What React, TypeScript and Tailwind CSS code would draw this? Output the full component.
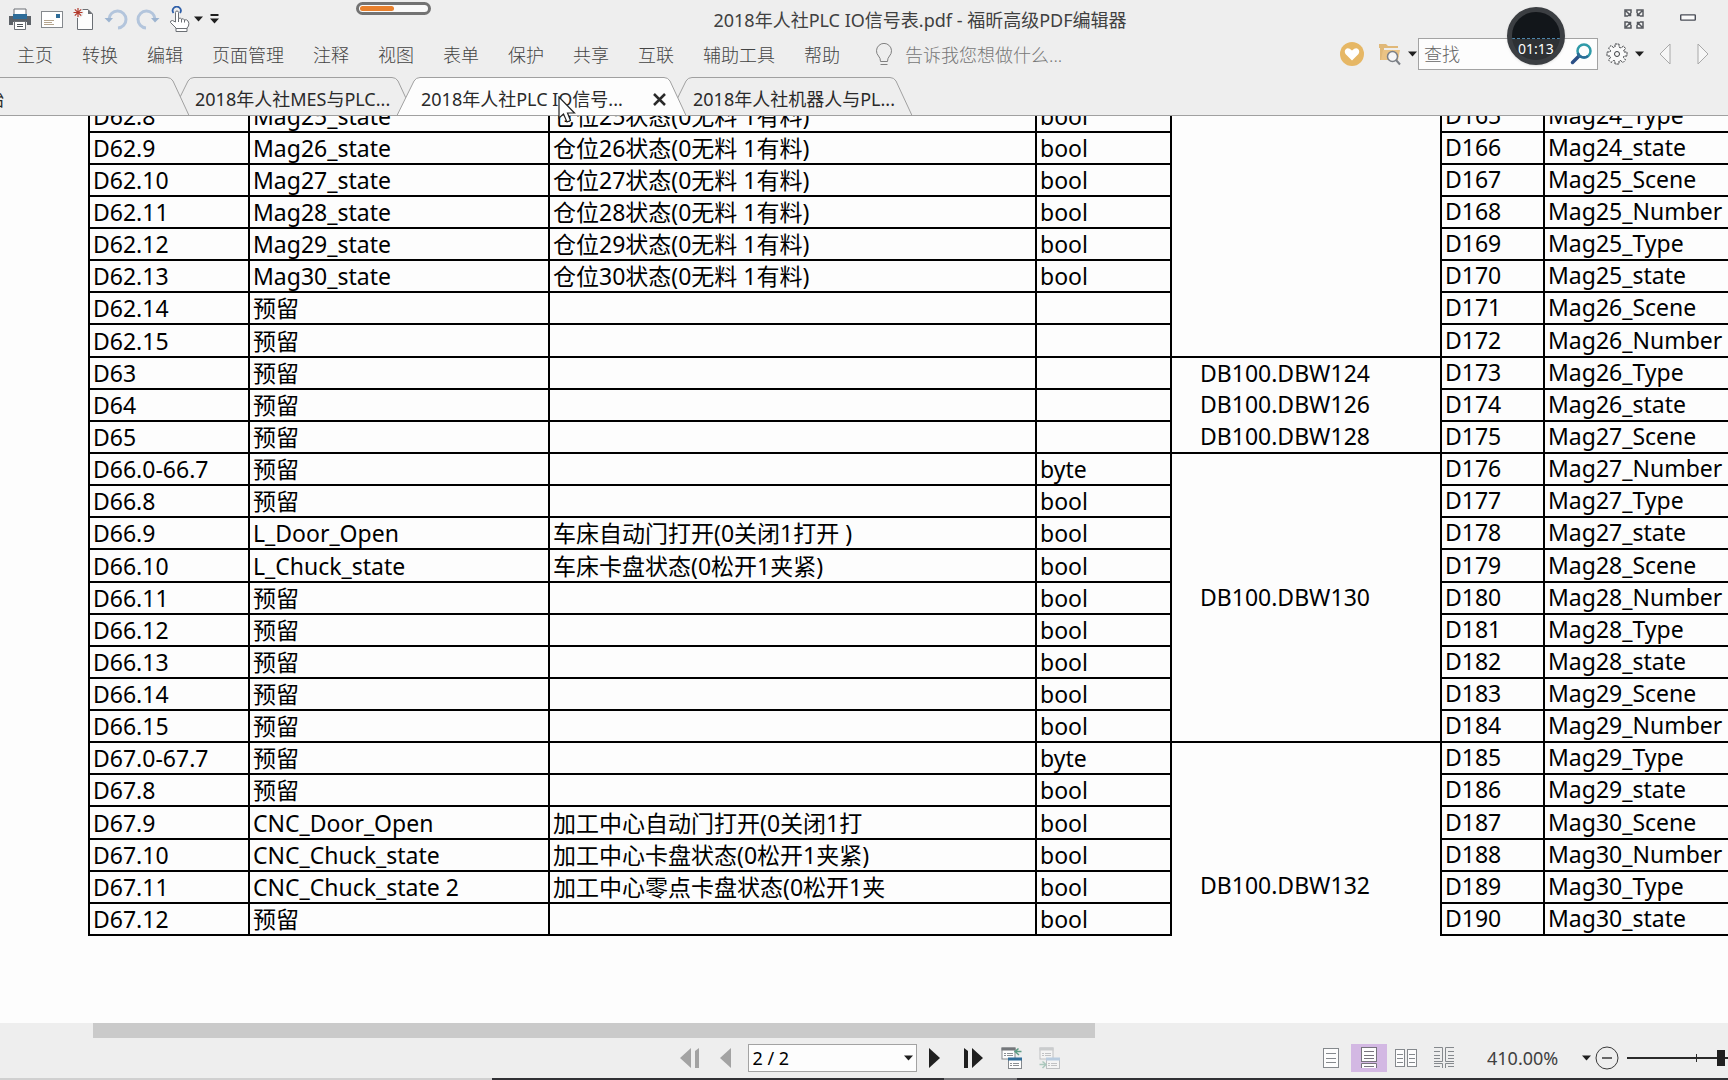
import type { ReactNode } from "react";

interface Tab {
  title: string;
  width: number;
  className: string;
  active?: boolean;
}

interface Row {
  addr: string;
  name: string;
  desc?: string;
  type?: string;
  tall?: boolean;
  rightAddr: string;
  rightName: string;
}

interface Group {
  span: number;
  label: string;
  className: string;
}

const MENUS = [
  "主页",
  "转换",
  "编辑",
  "页面管理",
  "注释",
  "视图",
  "表单",
  "保护",
  "共享",
  "互联",
  "辅助工具",
  "帮助",
];

const TABS: Tab[] = [
  { title: "开始", width: 249, className: "z-20 w-[249px] -ml-[60px] pl-7" },
  { title: "2018年人社MES与PLC...", width: 243, className: "z-10 w-[243px] -ml-[18px] pl-6" },
  {
    title: "2018年人社PLC IO信号...",
    width: 289,
    className: "z-30 w-[289px] -ml-[17px] pl-6",
    active: true,
  },
  { title: "2018年人社机器人与PL...", width: 243, className: "z-10 w-[243px] -ml-[17px] pl-6" },
];

const ROWS: Row[] = [
  { addr: "D62.8", name: "Mag25_state", desc: "仓位25状态(0无料 1有料)", type: "bool", rightAddr: "D165", rightName: "Mag24_Type" },
  { addr: "D62.9", name: "Mag26_state", desc: "仓位26状态(0无料 1有料)", type: "bool", rightAddr: "D166", rightName: "Mag24_state" },
  { addr: "D62.10", name: "Mag27_state", desc: "仓位27状态(0无料 1有料)", type: "bool", rightAddr: "D167", rightName: "Mag25_Scene" },
  { addr: "D62.11", name: "Mag28_state", desc: "仓位28状态(0无料 1有料)", type: "bool", rightAddr: "D168", rightName: "Mag25_Number" },
  { addr: "D62.12", name: "Mag29_state", desc: "仓位29状态(0无料 1有料)", type: "bool", rightAddr: "D169", rightName: "Mag25_Type" },
  { addr: "D62.13", name: "Mag30_state", desc: "仓位30状态(0无料 1有料)", type: "bool", rightAddr: "D170", rightName: "Mag25_state" },
  { addr: "D62.14", name: "预留", rightAddr: "D171", rightName: "Mag26_Scene" },
  { addr: "D62.15", name: "预留", tall: true, rightAddr: "D172", rightName: "Mag26_Number" },
  { addr: "D63", name: "预留", rightAddr: "D173", rightName: "Mag26_Type" },
  { addr: "D64", name: "预留", rightAddr: "D174", rightName: "Mag26_state" },
  { addr: "D65", name: "预留", rightAddr: "D175", rightName: "Mag27_Scene" },
  { addr: "D66.0-66.7", name: "预留", type: "byte", rightAddr: "D176", rightName: "Mag27_Number" },
  { addr: "D66.8", name: "预留", type: "bool", rightAddr: "D177", rightName: "Mag27_Type" },
  { addr: "D66.9", name: "L_Door_Open", desc: "车床自动门打开(0关闭1打开 )", type: "bool", rightAddr: "D178", rightName: "Mag27_state" },
  { addr: "D66.10", name: "L_Chuck_state", desc: "车床卡盘状态(0松开1夹紧)", type: "bool", tall: true, rightAddr: "D179", rightName: "Mag28_Scene" },
  { addr: "D66.11", name: "预留", type: "bool", rightAddr: "D180", rightName: "Mag28_Number" },
  { addr: "D66.12", name: "预留", type: "bool", rightAddr: "D181", rightName: "Mag28_Type" },
  { addr: "D66.13", name: "预留", type: "bool", rightAddr: "D182", rightName: "Mag28_state" },
  { addr: "D66.14", name: "预留", type: "bool", rightAddr: "D183", rightName: "Mag29_Scene" },
  { addr: "D66.15", name: "预留", type: "bool", rightAddr: "D184", rightName: "Mag29_Number" },
  { addr: "D67.0-67.7", name: "预留", type: "byte", rightAddr: "D185", rightName: "Mag29_Type" },
  { addr: "D67.8", name: "预留", type: "bool", rightAddr: "D186", rightName: "Mag29_state" },
  { addr: "D67.9", name: "CNC_Door_Open", desc: "加工中心自动门打开(0关闭1打", type: "bool", tall: true, rightAddr: "D187", rightName: "Mag30_Scene" },
  { addr: "D67.10", name: "CNC_Chuck_state", desc: "加工中心卡盘状态(0松开1夹紧)", type: "bool", rightAddr: "D188", rightName: "Mag30_Number" },
  { addr: "D67.11", name: "CNC_Chuck_state 2", desc: "加工中心零点卡盘状态(0松开1夹", type: "bool", rightAddr: "D189", rightName: "Mag30_Type" },
  { addr: "D67.12", name: "预留", type: "bool", rightAddr: "D190", rightName: "Mag30_state" },
];

// Merged cells of the middle column, keyed by the row they start on
const GROUPS: Record<number, Group> = {
  0: { span: 8, label: "", className: "border-b-2" },
  8: { span: 1, label: "DB100.DBW124", className: "pb-0.5" },
  9: { span: 1, label: "DB100.DBW126", className: "pb-0.5" },
  10: { span: 1, label: "DB100.DBW128", className: "border-b-2 pb-0.5" },
  11: { span: 9, label: "DB100.DBW130", className: "border-b-2 pb-0.5" },
  20: { span: 6, label: "DB100.DBW132", className: "align-bottom pb-9" },
};

const Caret = () => (
  <svg width="9" height="6" viewBox="0 0 9 6" className="shrink-0" aria-hidden="true">
    <path d="M0 0.5H9L4.5 5.5Z" fill="#1f1f1f" />
  </svg>
);

interface IconButtonProps {
  label: string;
  className?: string;
  children: ReactNode;
}

const IconButton = ({ label, className = "", children }: IconButtonProps) => (
  <button type="button" aria-label={label} className={`flex shrink-0 items-center justify-center ${className}`}>
    {children}
  </button>
);

const QuickAccess = () => (
  <div className="flex h-full shrink-0 items-center pl-2">
    <IconButton label="打印" className="w-6">
      <svg width="24" height="24" viewBox="0 0 24 24">
        <path d="M6 2H18V8H6Z" fill="#fff" stroke="#6b6f74" />
        <path d="M1 9H5V12H19V9H23V18H19V15H5V18H1Z" fill="#5d6268" />
        <rect x="5" y="7" width="14" height="5" fill="#2f6d99" />
        <path d="M6.5 14.5H17.5V22.5H6.5Z" fill="#fff" stroke="#6b6f74" />
        <path d="M9 17.5H15M9 19.5H15" stroke="#4d5257" />
      </svg>
    </IconButton>
    <IconButton label="电子邮件" className="ml-2 w-6">
      <svg width="24" height="24" viewBox="0 0 24 24">
        <rect x="1.5" y="4.5" width="21" height="16" fill="#fff" stroke="#85898d" />
        <rect x="16" y="7" width="4" height="4" fill="#2f6d99" />
        <path d="M4 13.5H14M4 15.5H12M4 17.5H14" stroke="#b5a58e" />
      </svg>
    </IconButton>
    <IconButton label="新建" className="ml-2 w-6">
      <svg width="24" height="24" viewBox="0 0 24 24">
        <path d="M5.5 2.5H16L20.5 7V22.5H5.5Z" fill="#fdfdfd" stroke="#6b6f74" />
        <path d="M16 2.5V7H20.5Z" fill="#6b6f74" />
        <circle cx="6" cy="5.5" r="5.5" fill="#eee" />
        <path d="M6 1V10M1.5 5.5H10.5M2.8 2.3L9.2 8.7M9.2 2.3L2.8 8.7" stroke="#b33a2c" strokeWidth="1.2" />
      </svg>
    </IconButton>
    <IconButton label="撤销" className="ml-2 w-6">
      <svg width="24" height="24" viewBox="0 0 24 24">
        <path d="M5 12A8.5 8.5 0 1 1 14 21" fill="none" stroke="#b3c5dc" strokeWidth="3" />
        <path d="M0.5 11H9L5 15.5Z" fill="#9db4d0" />
      </svg>
    </IconButton>
    <IconButton label="重做" className="ml-2 w-6">
      <svg width="24" height="24" viewBox="0 0 24 24">
        <path d="M19 12A8.5 8.5 0 1 0 10 21" fill="none" stroke="#b3c5dc" strokeWidth="3" />
        <path d="M23.5 11H15L19 15.5Z" fill="#9db4d0" />
      </svg>
    </IconButton>
    <IconButton label="手型工具" className="ml-2 w-6">
      <svg width="24" height="26" viewBox="0 0 24 26">
        <path d="M5.5 7A4 4 0 1 1 12 7" fill="none" stroke="#2f5fa8" strokeWidth="1.8" />
        <path
          d="M7.5 16V6.5Q7.5 5 9 5T10.5 6.5V12.5Q12.5 11.5 13.5 13Q15.5 12 16.5 14Q18.5 13 20 15Q21.5 17 20.5 20L19 22V25.5H8V22L2.5 16.5Q2 14.5 4.5 14.5Z"
          fill="#fff"
          stroke="#6b6f74"
        />
        <path d="M10.5 12.5V16M13.5 13V16.5M16.5 14V16.5M8 22.5H19" stroke="#6b6f74" />
      </svg>
    </IconButton>
    <IconButton label="更多工具" className="w-3">
      <Caret />
    </IconButton>
    <IconButton label="自定义快速访问工具栏" className="ml-1 w-3">
      <svg width="9" height="10" viewBox="0 0 9 10">
        <path d="M0.5 0H8.5V2H0.5ZM0 4.5H9L4.5 9.5Z" fill="#1f1f1f" />
      </svg>
    </IconButton>
  </div>
);

const SearchTools = () => (
  <div className="flex h-8 shrink-0 items-center pr-4">
    <IconButton label="收藏" className="w-6">
      <svg width="24" height="24" viewBox="0 0 24 24">
        <circle cx="12" cy="12" r="12" fill="#e6b765" />
        <path d="M12 18.5L5.5 12Q3.8 9 6 7T12 8.5Q15.8 5 18 7T18.5 12Z" fill="#fff" />
      </svg>
    </IconButton>
    <IconButton label="搜索文件夹" className="ml-[14px] w-6">
      <svg width="24" height="24" viewBox="0 0 24 24">
        <path d="M1 2H8L10 4H20V6H6V18H2V6H1Z" fill="#e0b878" />
        <path d="M5 8H22L20 18H3Z" fill="#eac384" />
        <circle cx="14.5" cy="14.5" r="5" fill="#f6f6f6" stroke="#7b7f86" strokeWidth="1.5" />
        <path d="M18 18L22 22.5" stroke="#7b7f86" strokeWidth="2" />
      </svg>
    </IconButton>
    <IconButton label="搜索选项" className="ml-1 w-3">
      <Caret />
    </IconButton>
    <div className="flex h-8 w-[180px] items-center border border-[#a3a3a3] bg-[#fdfdfd] pr-1">
      <input
        type="text"
        aria-label="查找"
        placeholder="查找"
        className="min-w-0 flex-1 bg-transparent pl-[5px] text-lg leading-6 font-light outline-none placeholder:text-[#666]"
      />
      <IconButton label="开始查找" className="w-6">
        <svg width="22" height="22" viewBox="0 0 22 22">
          <path d="M2.5 19.5L10 12" stroke="#2b4f86" strokeWidth="3.5" strokeLinecap="round" />
          <circle cx="14" cy="8" r="6.5" fill="#fdfdfd" stroke="#2f9aa8" strokeWidth="2.5" />
          <path d="M7.8 10A6.5 6.5 0 0 0 18 13" fill="none" stroke="#2a6c97" strokeWidth="2.5" />
        </svg>
      </IconButton>
    </div>
    <IconButton label="设置" className="ml-2 w-[22px]">
      <svg width="22" height="22" viewBox="0 0 22 22" fill="#fafafa" stroke="#3d3f42">
        <path
          d="M9 1H13V4L15 5L17.5 3L19.5 5.5L17.5 8L18 9H21V13H18L17.5 14.5L19.5 17L17 19.5L14.5 17.5L13 18V21H9V18L7.5 17.5L5 19.5L2.5 17L4.5 14.5L4 13H1V9H4L4.5 7.5L2.5 5L5 2.5L7.5 4.5L9 4Z"
          strokeDasharray="2.5 0.8"
        />
        <circle cx="11" cy="11" r="2.5" />
      </svg>
    </IconButton>
    <IconButton label="设置选项" className="ml-[2px] w-[18px]">
      <Caret />
    </IconButton>
    <IconButton label="上一个" className="ml-2 w-[18px]">
      <svg width="12" height="22" viewBox="0 0 12 22">
        <path d="M11 1V21L1 11Z" fill="#f6f6f6" stroke="#a8a8a8" />
      </svg>
    </IconButton>
    <IconButton label="下一个" className="ml-5 w-[18px]">
      <svg width="12" height="22" viewBox="0 0 12 22">
        <path d="M1 1V21L11 11Z" fill="#f6f6f6" stroke="#a8a8a8" />
      </svg>
    </IconButton>
  </div>
);

const TitleBar = () => (
  <div className="flex h-[38px] items-center">
    <QuickAccess />
    <h1 className="min-w-0 flex-1 truncate pt-0.5 pr-1 text-center text-lg leading-6 text-[#404040]">
      2018年人社PLC IO信号表.pdf - 福昕高级PDF编辑器
    </h1>
    <div className="flex h-8 shrink-0 items-center gap-9 pr-8">
      <IconButton label="全屏" className="w-5">
        <svg width="20" height="20" viewBox="0 0 20 20" fill="none" stroke="#55585e" strokeWidth="1.5">
          <path d="M4 7H1V1H7V4M16 7H19V1H13V4M4 13H1V19H7V16M16 13H19V19H13V16M2 2L6.5 6.5M6.5 4V6.5H4M18 2L13.5 6.5M13.5 4V6.5H16M2 18L6.5 13.5M4 13.5H6.5V16M18 18L13.5 13.5M16 13.5H13.5V16" />
        </svg>
      </IconButton>
      <IconButton label="最小化" className="w-4 pb-1">
        <svg width="17" height="7" viewBox="0 0 17 7">
          <rect x="0.75" y="0.75" width="15.5" height="5.5" rx="0.5" fill="#fafafa" stroke="#4a4d57" strokeWidth="1.5" />
        </svg>
      </IconButton>
    </div>
  </div>
);

const MenuBar = () => (
  <div className="flex h-8 items-center">
    <nav className="flex shrink-0 gap-[29px] pt-0.5 pl-[17px]">
      {MENUS.map((menu) => (
        <button key={menu} type="button" className="text-lg leading-6 font-light text-[#444]">
          {menu}
        </button>
      ))}
    </nav>
    <label className="ml-[35px] flex min-w-0 flex-1 items-center gap-3 pt-0.5">
      <svg width="18" height="24" viewBox="0 0 18 24" fill="none" stroke="#808080" className="shrink-0" aria-hidden="true">
        <path d="M5.5 18.5Q5.5 15 3.5 13A7.5 7.5 0 1 1 14.5 13Q12.5 15 12.5 18.5ZM5.5 21.5H12.5" />
      </svg>
      <input
        type="text"
        aria-label="告诉我您想做什么"
        placeholder="告诉我您想做什么..."
        className="w-60 bg-transparent text-lg leading-6 font-light outline-none placeholder:text-[#777]"
      />
    </label>
    <SearchTools />
  </div>
);

const TabBar = () => (
  <div className="mt-[7px] flex h-[38px]">
    {TABS.map((tab) => (
      <div key={tab.title} className={`relative flex shrink-0 items-center pt-1.5 ${tab.className}`}>
        <svg
          width={tab.width}
          height="38"
          className="absolute inset-0"
          fill={tab.active ? "#fdfdfd" : "#eeeeee"}
          stroke="#a0a0a0"
          aria-hidden="true"
        >
          <path d={`M0 38.5L17 4Q19 0.5 23 0.5H${tab.width - 22}Q${tab.width - 18} 0.5 ${tab.width - 16} 4L${tab.width} 38.5`} />
        </svg>
        <button type="button" className="relative flex-1 text-left text-lg leading-6 whitespace-nowrap text-[#2a2a2a]">
          {tab.title}
        </button>
        {tab.active && (
          <button type="button" aria-label="关闭" className="relative mr-5">
            <svg width="13" height="13" viewBox="0 0 13 13" stroke="#2a2a2a" strokeWidth="2.5">
              <path d="M1 1L12 12M12 1L1 12" />
            </svg>
          </button>
        )}
      </div>
    ))}
  </div>
);

const cell = "border-2 border-black pt-0 pr-0 pl-[3px] whitespace-nowrap";

const SignalTable = () => (
  <table className="-mt-[17px] ml-[88px] w-[1760px] table-fixed border-collapse text-[23px] leading-7 text-black">
    <colgroup>
      <col className="w-[160px]" />
      <col className="w-[300px]" />
      <col className="w-[487px]" />
      <col className="w-[135px]" />
      <col className="w-[270px]" />
      <col className="w-[103px]" />
      <col />
    </colgroup>
    <tbody>
      {ROWS.map((row, index) => {
        const group = GROUPS[index];
        return (
          <tr key={row.addr} className={row.tall ? "h-[33px]" : "h-8"}>
            <td className={`${cell} pb-0`}>{row.addr}</td>
            <td className={`${cell} pb-0`}>{row.name}</td>
            <td className={`${cell} pb-0`}>{row.desc}</td>
            <td className={`${cell} pb-0`}>{row.type}</td>
            {group && (
              <td rowSpan={group.span} className={`border-black pt-0 pl-7 ${group.className}`}>
                {group.label}
              </td>
            )}
            <td className={`${cell} pb-0.5`}>{row.rightAddr}</td>
            <td className={`${cell} pb-0.5`}>{row.rightName}</td>
          </tr>
        );
      })}
    </tbody>
  </table>
);

const StatusBar = () => (
  <footer className="grid h-10 shrink-0 grid-cols-[1fr_auto_1fr] items-center bg-[#eeeeee] pl-3">
    <div />
    <div className="flex items-center">
      <IconButton label="第一页" className="w-5">
        <svg width="20" height="20" viewBox="0 0 20 20" fill="#a3a3a3">
          <path d="M11 0V20L0 10ZM19 0V20H15V3Z" />
        </svg>
      </IconButton>
      <IconButton label="上一页" className="ml-5 w-3">
        <svg width="11" height="20" viewBox="0 0 11 20" fill="#a3a3a3">
          <path d="M11 0V20L0 10Z" />
        </svg>
      </IconButton>
      <div className="relative ml-4 flex items-center">
        <select
          aria-label="页码"
          className="h-7 w-[169px] appearance-none border border-[#a3a3a3] bg-[#fdfdfd] pl-1 text-lg leading-6 text-black"
        >
          <option>2 / 2</option>
          <option>1 / 2</option>
        </select>
        <span className="pointer-events-none absolute right-1">
          <Caret />
        </span>
      </div>
      <IconButton label="下一页" className="ml-3 w-3">
        <svg width="11" height="20" viewBox="0 0 11 20" fill="#1f1f1f">
          <path d="M0 0V20L11 10Z" />
        </svg>
      </IconButton>
      <IconButton label="最后一页" className="ml-5 w-6">
        <svg width="20" height="20" viewBox="0 0 20 20" fill="#1f1f1f">
          <path d="M9 0V20L20 10ZM1 0V20H5V3Z" />
        </svg>
      </IconButton>
      <IconButton label="上一视图" className="ml-4 w-[22px]">
        <svg width="22" height="22" viewBox="0 0 22 22">
          <rect x="1" y="1" width="13" height="11" fill="#fdfdfd" stroke="#85898d" />
          <rect x="0.5" y="0.5" width="14" height="3" fill="#74777b" />
          <path d="M3 6.5H5M6 6.5H12M3 8.5H5M6 8.5H12" stroke="#8b8f93" />
          <path d="M20.5 4.5H14M17.5 1.5L14 4.5L18 8" fill="none" stroke="#5c9c84" strokeWidth="1.5" />
          <rect x="7.5" y="11.5" width="13" height="10" fill="#fdfdfd" stroke="#85898d" />
          <rect x="7" y="10.5" width="14" height="3" fill="#2f6d99" />
          <path d="M9 16.5H11M12 16.5H18M9 18.5H11M12 18.5H18" stroke="#8b8f93" />
        </svg>
      </IconButton>
      <IconButton label="下一视图" className="ml-4 w-[22px]">
        <svg width="22" height="22" viewBox="0 0 22 22" opacity="0.45">
          <rect x="1" y="1" width="13" height="11" fill="#fdfdfd" stroke="#85898d" />
          <rect x="0.5" y="0.5" width="14" height="3" fill="#a0a3a7" />
          <path d="M3 6.5H5M6 6.5H12M3 8.5H5M6 8.5H12" stroke="#8b8f93" />
          <rect x="7.5" y="11.5" width="13" height="10" fill="#fdfdfd" stroke="#85898d" />
          <rect x="7" y="10.5" width="14" height="3" fill="#7aa5cf" />
          <path d="M9 16.5H11M12 16.5H18M9 18.5H11M12 18.5H18" stroke="#8b8f93" />
          <path d="M0.5 17.5H7M3.5 14.5L7 17.5L3.5 21" fill="none" stroke="#5c9c84" strokeWidth="1.5" />
        </svg>
      </IconButton>
    </div>
    <div className="flex items-center justify-end">
      <IconButton label="单页" className="w-4">
        <svg width="16" height="20" viewBox="0 0 16 20" fill="#fdfdfd" stroke="#85898d">
          <rect x="0.5" y="0.5" width="15" height="19" />
          <path d="M3 5.5H13M3 10.5H13M3 14.5H13" />
        </svg>
      </IconButton>
      <IconButton label="连续" className="ml-3 h-7 w-9 bg-[#d3b8e3]">
        <svg width="16" height="22" viewBox="0 0 16 22" fill="#fdfdfd" stroke="#77737d">
          <rect x="0.5" y="0.5" width="15" height="14" />
          <path d="M3 4.5H13M3 8.5H13M3 11.5H13" />
          <path d="M0.5 21V16.5H15.5V21" />
          <path d="M3 19.5H13" />
        </svg>
      </IconButton>
      <IconButton label="对开" className="ml-2 w-[22px]">
        <svg width="22" height="18" viewBox="0 0 22 18" fill="#fdfdfd" stroke="#85898d">
          <rect x="0.5" y="0.5" width="9" height="17" />
          <rect x="12.5" y="0.5" width="9" height="17" />
          <path d="M2 5.5H8M2 9.5H8M2 13.5H8M14 5.5H20M14 9.5H20M14 13.5H20" />
        </svg>
      </IconButton>
      <IconButton label="连续对开" className="ml-4 w-[22px]">
        <svg width="22" height="22" viewBox="0 0 22 22" fill="none" stroke="#85898d">
          <path d="M1 0.5H9.5V14.5H1M21 0.5H12.5V14.5H21M1 16.5H9.5V21M21 16.5H12.5V21" />
          <path d="M1 4.5H7M1 8.5H7M1 11.5H7M15 4.5H21M15 8.5H21M15 11.5H21M1 19.5H7M15 19.5H21" />
        </svg>
      </IconButton>
      <div className="relative ml-8 flex items-center">
        <select
          aria-label="缩放比例"
          className="w-[104px] appearance-none bg-transparent text-lg leading-6 text-[#404040]"
        >
          <option>410.00%</option>
          <option>100.00%</option>
        </select>
        <span className="pointer-events-none absolute right-0">
          <Caret />
        </span>
      </div>
      <IconButton label="缩小" className="ml-1 w-6">
        <svg width="24" height="24" viewBox="0 0 24 24" fill="none" stroke="#3a3a3a">
          <circle cx="12" cy="12" r="11" />
          <path d="M7 12H17" strokeWidth="1.5" />
        </svg>
      </IconButton>
      <div className="relative ml-2 flex w-[101px] items-center">
        <span className="absolute left-[69px] h-2 w-px bg-[#2a2a2a]" />
        <input
          type="range"
          aria-label="缩放"
          min={0}
          max={100}
          defaultValue={97}
          className="h-5 w-full appearance-none bg-transparent [&::-webkit-slider-runnable-track]:h-[2px] [&::-webkit-slider-runnable-track]:bg-[#2a2a2a] [&::-webkit-slider-thumb]:-mt-[7px] [&::-webkit-slider-thumb]:h-4 [&::-webkit-slider-thumb]:w-2 [&::-webkit-slider-thumb]:appearance-none [&::-webkit-slider-thumb]:bg-[#1f1f1f]"
        />
      </div>
    </div>
  </footer>
);

export default function App() {
  return (
    <div className="relative flex h-screen flex-col overflow-hidden bg-[#fdfdfd] font-['Noto_Sans','Noto_Sans_CJK_SC',sans-serif]">
      <header className="shrink-0 border-b border-[#a0a0a0] bg-[#eeeeee]">
        <TitleBar />
        <MenuBar />
        <TabBar />
      </header>

      <main className="min-h-0 flex-1 overflow-hidden">
        <SignalTable />
      </main>

      {/* Horizontal scrollbar */}
      <div className="h-[15px] shrink-0 bg-[#eeeeee]">
        <div className="ml-[93px] h-full w-[58%] bg-[#cacaca]" />
      </div>

      <StatusBar />

      {/* Top edge of the taskbar */}
      <div className="flex h-0.5 shrink-0 bg-[#303034]">
        <div className="w-[492px] bg-[#d0d0d0]" />
        <div className="ml-[452px] w-[73px] bg-[#77777a]" />
      </div>

      {/* Recorder progress pill */}
      <div className="absolute top-[2px] left-[356px] h-[13px] w-[75px] rounded-full border-[3px] border-[#737373] bg-[#fafafa] p-px">
        <div className="h-full w-1/2 rounded-full bg-[#e8802c]" />
      </div>

      {/* Recorder timer */}
      <div className="absolute top-[7px] right-[163px] z-40 h-[58px] w-[58px] overflow-hidden rounded-full border-[5px] border-[#3b3e42] bg-[#2e3134] shadow">
        <div className="h-[27px] border-b border-dashed border-[#4d86ab] bg-[#12161a]" />
        <p className="text-center text-sm leading-5 text-white">01:13</p>
      </div>

      {/* Mouse pointer */}
      <svg width="18" height="28" viewBox="0 0 18 28" className="absolute top-24 left-[558px] z-40" aria-hidden="true">
        <path d="M1 1V22L5.5 18L9 26L12.5 24.5L9.5 17H16.5Z" fill="#fff" stroke="#222" strokeWidth="1.2" />
      </svg>
    </div>
  );
}
